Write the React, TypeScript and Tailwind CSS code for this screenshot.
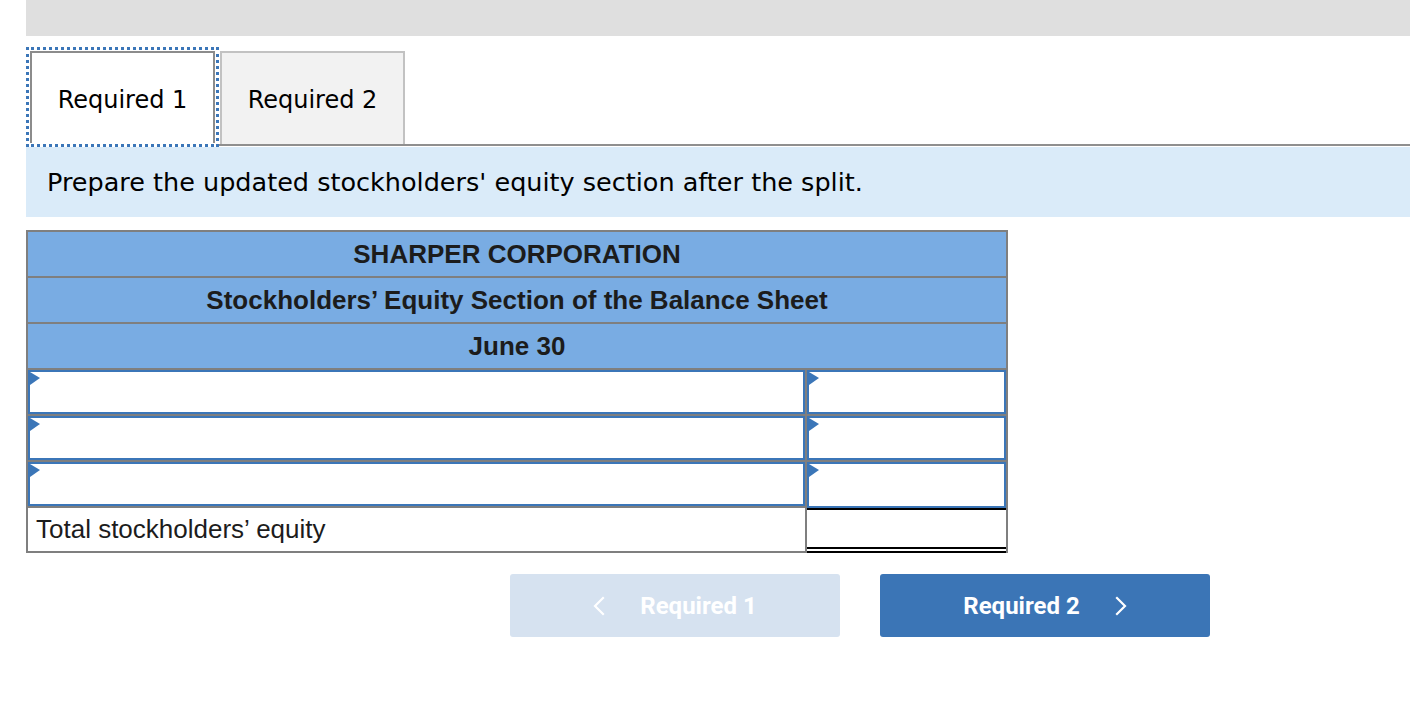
import React from 'react';

const verdana = { fontFamily: '"DejaVu Sans", Verdana, sans-serif' };

const Marker: React.FC = () => (
  <span className="absolute top-0 left-0 w-0 h-0 border-t-[6px] border-b-[7px] border-l-[10px] border-t-transparent border-b-transparent border-l-[#3b76b8]" />
);

const InputCell: React.FC<{ className?: string }> = ({ className }) => (
  <div className={className}>
    <div className="relative h-full border-2 border-[#3b76b8] bg-white">
      <Marker />
    </div>
  </div>
);

const Chevron: React.FC<{ dir: 'left' | 'right' }> = ({ dir }) => (
  <svg width="12" height="20" viewBox="0 0 12 20" fill="none" stroke="white" strokeWidth="2.2" strokeLinecap="square">
    {dir === 'left' ? <polyline points="10,2 2,10 10,18" /> : <polyline points="2,2 10,10 2,18" />}
  </svg>
);

export default function App() {
  const headers = ['SHARPER CORPORATION', 'Stockholders’ Equity Section of the Balance Sheet', 'June 30'];

  return (
    <div className="min-h-[720px] bg-white pl-[26px]">
      <div className="h-[36px] bg-[#dfdfdf]" />

      {/* tabs */}
      <div className="mt-[11px] flex items-start" style={verdana}>
        <div className="h-[100px] w-[193px] border-[3px] border-dotted border-[#3b76b8] p-px">
          <div className="flex h-full items-center justify-center border-2 border-b-0 border-[#8c8c8c] bg-white pt-[3px] text-[24px] text-black">
            Required 1
          </div>
        </div>
        <div className="flex h-[99px] flex-1 items-end border-b-2 border-[#8f8f8f] pl-px">
          <div className="flex h-[93px] w-[185px] items-center justify-center border-2 border-b-0 border-[#c2c2c2] bg-[#f2f2f2] pt-[2px] text-[24px] text-black">
            Required 2
          </div>
        </div>
      </div>

      <div className="flex h-[70px] items-center bg-[#daebf9] pl-[21px] text-[25.5px] text-black" style={verdana}>
        Prepare the updated stockholders' equity section after the split.
      </div>

      {/* statement table */}
      <div
        className="mt-[13px] w-[982px] border-x-2 border-t-2 border-[#7f7f7f]"
        style={{ fontFamily: '"Liberation Sans", Arial, sans-serif' }}
      >
        {headers.map((h) => (
          <div
            key={h}
            className="flex h-[46px] items-center justify-center border-b-2 border-[#7f7f7f] bg-[#79ace3] text-[26px] font-bold text-[#1c1c1c]"
          >
            {h}
          </div>
        ))}

        {[0, 1, 2].map((i) => (
          <div key={i} className="grid h-[46px] grid-cols-[779px_1fr]">
            <InputCell className="border-r-2 border-b-2 border-[#7f7f7f]" />
            <InputCell className={i === 2 ? '' : 'border-b-2 border-[#7f7f7f]'} />
          </div>
        ))}

        <div className="grid h-[45px] grid-cols-[779px_1fr]">
          <div className="flex items-center border-r-2 border-b-2 border-[#7f7f7f] pl-[8px] text-[26px] text-[#1c1c1c]">
            Total stockholders’ equity
          </div>
          <div className="border-t-2 border-b-[6px] border-double border-black bg-white" />
        </div>
      </div>

      {/* navigation */}
      <div className="ml-[484px] mt-[21px] flex gap-[40px]" style={{ fontFamily: 'Roboto, sans-serif' }}>
        <button className="flex h-[63px] w-[330px] items-center justify-center gap-[35px] rounded-[3px] bg-[#d6e2f0] text-[24px] font-bold text-white">
          <Chevron dir="left" />
          <span>Required 1</span>
        </button>
        <button className="flex h-[63px] w-[330px] items-center justify-center gap-[35px] rounded-[3px] bg-[#3b75b6] text-[24px] font-bold text-white">
          <span>Required 2</span>
          <Chevron dir="right" />
        </button>
      </div>
    </div>
  );
}
